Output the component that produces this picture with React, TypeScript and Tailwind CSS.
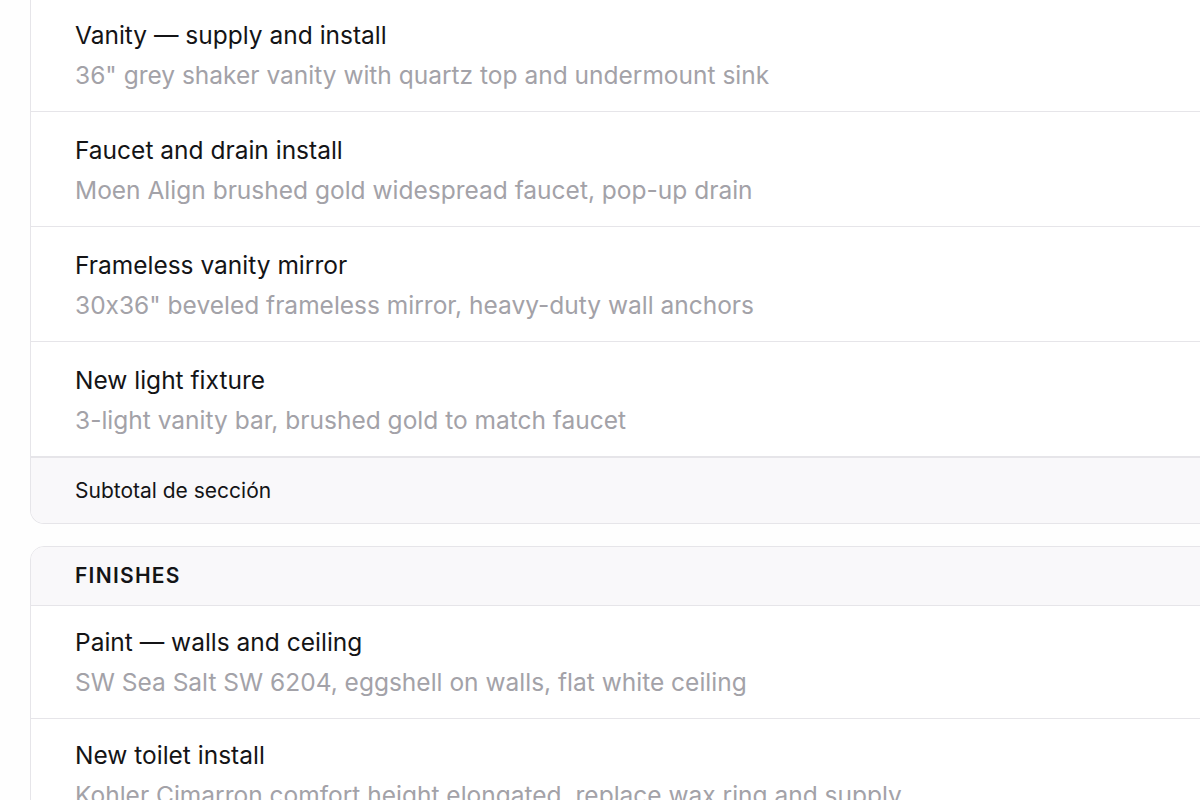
import React from 'react';

type Item = { title: string; detail: string };

const fixtures: Item[] = [
  { title: 'Vanity — supply and install', detail: '36" grey shaker vanity with quartz top and undermount sink' },
  { title: 'Faucet and drain install', detail: 'Moen Align brushed gold widespread faucet, pop-up drain' },
  { title: 'Frameless vanity mirror', detail: '30x36" beveled frameless mirror, heavy-duty wall anchors' },
  { title: 'New light fixture', detail: '3-light vanity bar, brushed gold to match faucet' },
];

const finishes: Item[] = [
  { title: 'Paint — walls and ceiling', detail: 'SW Sea Salt SW 6204, eggshell on walls, flat white ceiling' },
  { title: 'New toilet install', detail: 'Kohler Cimarron comfort height elongated, replace wax ring and supply' },
];

const Row: React.FC<{ item: Item }> = ({ item }) => (
  <div className="border-b border-[#e6e5e9] px-[44px] pt-6 pb-[22px] last:border-b-0">
    <p className="whitespace-nowrap text-[24.5px] leading-[28px] text-[#141416]">{item.title}</p>
    <p className="mt-3 whitespace-nowrap text-[24.5px] leading-[28px] text-[#a3a2a8]">{item.detail}</p>
  </div>
);

export default function App() {
  return (
    <div className="h-[800px] overflow-hidden bg-[#fefefe] pl-[30px] font-['Inter',sans-serif] [font-feature-settings:'calt'_0]">
      <div className="-mt-[3px] flex w-[1250px] flex-col gap-[22px]">
        <section className="overflow-hidden rounded-b-[14px] border border-t-0 border-[#e6e5e9] bg-white">
          {fixtures.map(f => (
            <Row key={f.title} item={f} />
          ))}
          <div className="flex h-[66px] items-center border-t border-[#e6e5e9] bg-[#f9f8fa] px-[44px]">
            <span className="text-[21px] text-[#141416]">Subtotal de sección</span>
          </div>
        </section>

        <section className="overflow-hidden rounded-[14px] border border-[#e6e5e9] bg-white">
          <div className="flex h-[59px] items-center border-b border-[#e6e5e9] bg-[#f9f8fa] px-[44px]">
            <span className="text-[21px] font-semibold tracking-[0.06em] text-[#141416]">FINISHES</span>
          </div>
          {finishes.map(f => (
            <div key={f.title} className="border-b border-[#e6e5e9] px-[44px] pt-[22px] pb-[22px] last:border-b-0">
              <p className="whitespace-nowrap text-[24.5px] leading-[28px] text-[#141416]">{f.title}</p>
              <p className="mt-3 whitespace-nowrap text-[24.5px] leading-[28px] text-[#a3a2a8]">{f.detail}</p>
            </div>
          ))}
        </section>
      </div>
    </div>
  );
}
